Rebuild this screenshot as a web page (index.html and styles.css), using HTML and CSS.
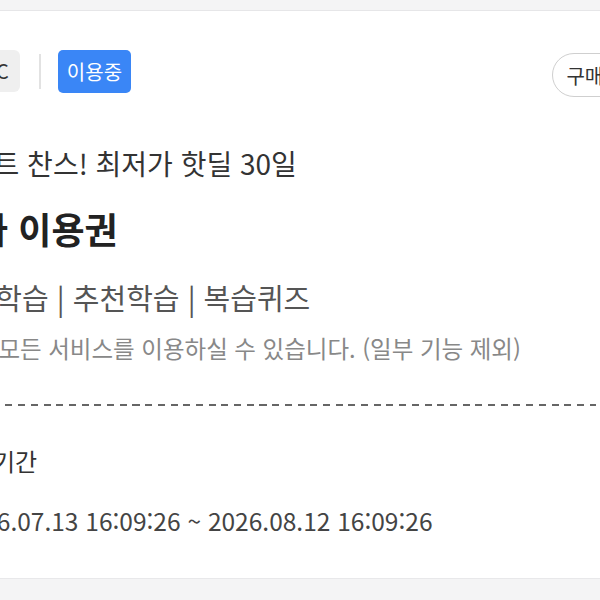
FILE: index.html
```html
<!DOCTYPE html>
<html lang="ko">
<head>
<meta charset="UTF-8">
<meta name="viewport" content="width=device-width, initial-scale=1.0">
<title>이용권 상세</title>
<link rel="stylesheet" href="styles.css">
</head>
<body>
    <div class="top-band"></div>

    <div class="ticket-card">
        <div class="ticket-head">
            <span class="grade-chip">BASIC</span>
            <span class="head-divider"></span>
            <span class="status-badge">이용중</span>
            <button class="buy-btn">구매하기</button>
        </div>

        <p class="promo">이벤트 찬스! 최저가 핫딜 30일</p>
        <h1 class="ticket-name">특가 이용권</h1>
        <p class="features">맞춤학습 | 추천학습 | 복습퀴즈</p>
        <p class="desc">앱 내 모든 서비스를 이용하실 수 있습니다. (일부 기능 제외)</p>

        <div class="dash-line"></div>

        <p class="period-label">이용 기간</p>
        <p class="period">2026.07.13 16:09:26 ~ 2026.08.12 16:09:26</p>
    </div>
</body>
</html>
```

FILE: styles.css
```css
body {
    margin: 0;
    background-color: #f4f4f5;
    font-family: "Noto Sans CJK KR", "Noto Sans", sans-serif;
    overflow: hidden;
}
.top-band {
    height: 10px;
    border-bottom: 1px solid #e6e6e8;
}
.ticket-card {
    background-color: #fff;
    margin-left: -58px;
    width: 712px;
    padding: 39px 0 42px 0;
    border-bottom: 1px solid #e8e8ea;
}
.ticket-head {
    display: flex;
    align-items: flex-start;
}
.grade-chip {
    height: 42px;
    padding: 0 11px;
    border-radius: 6px;
    background-color: #efefef;
    color: #333;
    font-size: 20px;
    line-height: 42px;
}
.head-divider {
    width: 2px;
    height: 35px;
    margin: 4px 17px 0 19px;
    background-color: #e2e2e2;
}
.status-badge {
    height: 43px;
    padding: 0 9px;
    border-radius: 5px;
    background-color: #3a86f6;
    color: #fff;
    font-size: 20px;
    line-height: 43px;
}
.buy-btn {
    margin-left: auto;
    margin-top: 3px;
    height: 44px;
    padding: 0 13px;
    border: 1.5px solid #cfcfcf;
    border-radius: 22px;
    background-color: #fff;
    color: #333;
    font-family: inherit;
    font-size: 20px;
}
.promo {
    margin: 51px 0 0 0;
    font-size: 28px;
    line-height: 30px;
    color: #333;
}
.ticket-name {
    margin: 30px 0 0 0;
    font-size: 36px;
    line-height: 40px;
    font-weight: bold;
    color: #222;
}
.features {
    margin: 34px 0 0 0;
    font-size: 29px;
    line-height: 30px;
    color: #555;
}
.desc {
    margin: 22px 0 0 0;
    font-size: 23.5px;
    line-height: 28px;
    color: #888;
}
.dash-line {
    width: 654px;
    height: 2px;
    margin-top: 42px;
    background: repeating-linear-gradient(90deg, #666 0 7px, transparent 7px 12.7px);
}
.period-label {
    margin: 40px 0 0 0;
    font-size: 24px;
    line-height: 30px;
    color: #333;
}
.period {
    margin: 30px 0 0 0;
    padding-left: 14px;
    font-size: 24.5px;
    line-height: 30px;
    color: #444;
}
```
